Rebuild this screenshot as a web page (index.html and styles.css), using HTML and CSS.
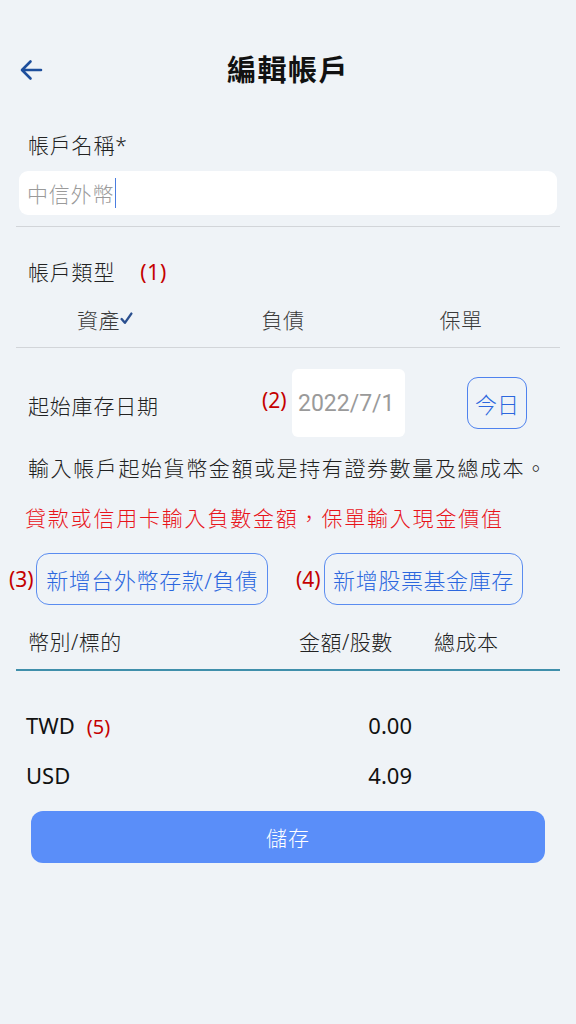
FILE: index.html
```html
<!DOCTYPE html>
<html lang="zh-Hant">
<head>
<meta charset="utf-8">
<title>編輯帳戶</title>
<link rel="stylesheet" href="styles.css">
</head>
<body>
<div class="app">
  <header class="header">
    <svg class="back" width="24" height="24" viewBox="0 0 24 24" aria-hidden="true">
      <path d="M22 12H3.5M11.5 3.5L3 12l8.5 8.5" fill="none" stroke="#1e4f9c" stroke-width="2.6" stroke-linecap="round" stroke-linejoin="round"/>
    </svg>
    <h1 class="title">編輯帳戶</h1>
  </header>

  <div class="label label-first">帳戶名稱*</div>
  <div class="input"><span class="placeholder">中信外幣</span><span class="caret"></span></div>
  <div class="divider"></div>

  <div class="label label-type">帳戶類型<span class="mark mark-1">(1)</span></div>
  <div class="tabs">
    <div class="tab">資產<svg class="check" width="13" height="13" viewBox="0 0 12 12" aria-hidden="true"><path d="M1.5 6.5l3 3.5 6-8.5" fill="none" stroke="#2a4f8f" stroke-width="2.2" stroke-linecap="round" stroke-linejoin="round"/></svg></div>
    <div class="tab">負債</div>
    <div class="tab">保單</div>
  </div>
  <div class="divider divider-tabs"></div>

  <div class="date-row">
    <span class="date-label">起始庫存日期</span>
    <span class="mark mark-2">(2)</span>
    <div class="date-box">2022/7/1</div>
    <button class="today">今日</button>
  </div>

  <p class="info">輸入帳戶起始貨幣金額或是持有證券數量及總成本。</p>
  <p class="warn">貸款或信用卡輸入負數金額，保單輸入現金價值</p>

  <div class="actions">
    <span class="mark mark-3">(3)</span>
    <button class="outline btn-cash">新增台外幣存款/負債</button>
    <span class="mark mark-4">(4)</span>
    <button class="outline btn-stock">新增股票基金庫存</button>
  </div>

  <div class="table-head">
    <span class="col-name">幣別/標的</span>
    <span class="col-amt">金額/股數</span>
    <span class="col-cost">總成本</span>
  </div>
  <div class="teal-line"></div>

  <div class="row row-first">
    <span class="col-name">TWD<span class="mark mark-5">(5)</span></span>
    <span class="col-val">0.00</span>
  </div>
  <div class="row">
    <span class="col-name">USD</span>
    <span class="col-val">4.09</span>
  </div>

  <button class="save">儲存</button>
</div>
</body>
</html>
```

FILE: styles.css
```css
* { box-sizing: border-box; }
html, body {
  margin: 0;
  padding: 0;
  background: #eff3f7;
}
body {
  font-family: "Noto Sans", "Noto Sans CJK TC", sans-serif;
  font-weight: 300;
  color: #222;
  width: 576px;
  height: 1024px;
  overflow: hidden;
}
.app {
  padding: 44px 16px 0 16px;
}
.header {
  height: 52px;
  display: flex;
  align-items: center;
  justify-content: center;
  position: relative;
}
.back {
  position: absolute;
  left: 3px;
  top: 14px;
}
.title {
  margin: 0;
  font-size: 29px;
  font-weight: 700;
  line-height: 52px;
  color: #111;
  letter-spacing: 1.5px;
}
.label {
  font-size: 21px;
  line-height: 30px;
  padding-left: 12px;
  color: #222;
  letter-spacing: 0.8px;
}
.label-first { margin-top: 34px; }
.input {
  margin: 11px 3px 0 3px;
  height: 44px;
  background: #fff;
  border-radius: 9px;
  display: flex;
  align-items: center;
  padding-left: 8px;
}
.placeholder {
  font-size: 21px;
  color: #9a9a9a;
  letter-spacing: 0.8px;
}
.caret {
  width: 1px;
  height: 30px;
  background: #4a7de0;
  margin-left: 1px;
}
.divider {
  margin-top: 11px;
  height: 1px;
  background: #d2d5d9;
}
.label-type { margin-top: 30px; }
.mark {
  color: #c40000;
  font-size: 21px;
  font-weight: 400;
  font-family: "Noto Sans", sans-serif;
}
.mark-1 { margin-left: 25px; }
.tabs {
  margin-top: 12px;
  height: 40px;
  display: grid;
  grid-template-columns: repeat(3, 1fr);
  padding-right: 10px;
}
.tab {
  display: flex;
  align-items: center;
  justify-content: center;
  font-size: 21px;
  color: #3a3a3a;
  letter-spacing: 0.5px;
}
.check { margin-left: 0; margin-bottom: 2px; }
.divider-tabs { margin-top: 8px; }

.date-row {
  margin-top: 21px;
  height: 68px;
  display: flex;
  align-items: center;
}
.date-label {
  width: 246px;
  padding-left: 12px;
  font-size: 21px;
  letter-spacing: 0.8px;
  margin-top: 4px;
}
.mark-2 { width: 30px; margin-top: -6px; }
.date-box {
  width: 113px;
  height: 68px;
  background: #fff;
  border-radius: 6px;
  font-size: 23px;
  color: #9a9a9a;
  display: flex;
  align-items: center;
  padding-left: 6px;
  font-family: Roboto, "Noto Sans", sans-serif;
  font-weight: 400;
}
.today {
  margin-left: 62px;
  width: 60px;
  height: 52px;
  border: 1px solid #4f82ee;
  border-radius: 11px;
  background: transparent;
  color: #2c67de;
  font-size: 22px;
  font-weight: 300;
  font-family: "Noto Sans", "Noto Sans CJK TC", sans-serif;
  padding: 0;
}
.info {
  margin: 16px 0 0 0;
  padding-left: 12px;
  font-size: 21px;
  line-height: 30px;
  letter-spacing: 1.6px;
  color: #222;
}
.warn {
  margin: 20px 0 0 0;
  padding-left: 9px;
  font-size: 21px;
  line-height: 30px;
  letter-spacing: 1.8px;
  color: #e8141b;
}
.actions {
  margin-top: 20px;
  height: 52px;
  display: flex;
  align-items: center;
  margin-left: -7px;
}
.mark-3 { width: 27px; }
.mark-4 { margin-left: 28px; width: 28px; }
.outline {
  height: 52px;
  border: 1px solid #5a8cf0;
  border-radius: 13px;
  background: transparent;
  color: #2c67de;
  font-size: 22px;
  font-weight: 300;
  font-family: "Noto Sans", "Noto Sans CJK TC", sans-serif;
  letter-spacing: 0.6px;
  padding: 0;
}
.btn-cash { width: 232px; }
.btn-stock { width: 199px; }

.table-head, .row {
  display: flex;
  align-items: center;
  height: 30px;
  font-size: 21px;
}
.table-head { margin-top: 21px; color: #222; letter-spacing: 0.5px; }
.col-name { width: 283px; padding-left: 12px; }
.col-amt { width: 135px; }
.teal-line {
  margin-top: 13px;
  height: 2px;
  background: #3f8fab;
}
.row { color: #111; font-size: 22px; font-weight: 400; }
.row .col-name { padding-left: 10px; }
.row-first { margin-top: 39px; }
.row + .row { margin-top: 20px; }
.mark-5 { margin-left: 12px; font-size: 20px; }
.col-val { width: 113px; text-align: right; }
.save {
  display: block;
  margin: 21px 15px 0 15px;
  width: 514px;
  height: 52px;
  border: none;
  border-radius: 12px;
  background: #5a8ef9;
  color: #fff;
  font-size: 21px;
  font-weight: 300;
  font-family: "Noto Sans", "Noto Sans CJK TC", sans-serif;
  letter-spacing: 1px;
}
```
